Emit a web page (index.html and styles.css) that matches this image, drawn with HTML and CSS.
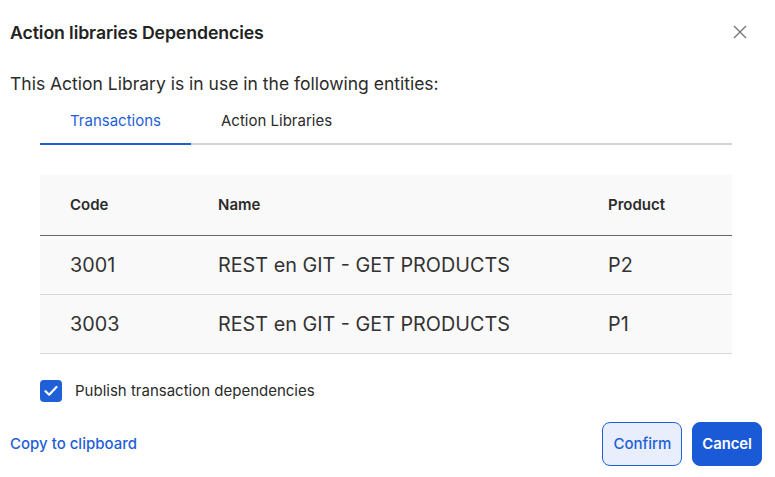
FILE: index.html
```html
<!DOCTYPE html>
<html>
<head>
<meta charset="utf-8">
<link rel="stylesheet" href="styles.css">
</head>
<body>
<div class="dialog">
  <div class="header">
    <h1 class="title">Action libraries Dependencies</h1>
    <button class="close" aria-label="Close">
      <svg width="14" height="14" viewBox="0 0 14 14"><path d="M1 1L13 13M13 1L1 13" stroke="#777" stroke-width="1.4" fill="none"/></svg>
    </button>
  </div>
  <p class="intro">This Action Library is in use in the following entities:</p>
  <div class="tabs">
    <div class="tab active">Transactions</div>
    <div class="tab">Action Libraries</div>
  </div>
  <table class="grid">
    <thead>
      <tr><th class="c1">Code</th><th class="c2">Name</th><th class="c3">Product</th></tr>
    </thead>
    <tbody>
      <tr><td>3001</td><td>REST en GIT - GET PRODUCTS</td><td>P2</td></tr>
      <tr><td>3003</td><td>REST en GIT - GET PRODUCTS</td><td>P1</td></tr>
    </tbody>
  </table>
  <label class="check">
    <span class="box"><svg width="14" height="12" viewBox="0 0 14 12"><path d="M1.5 6.2L5.2 9.8L12.5 2" stroke="#fff" stroke-width="2.2" fill="none" stroke-linecap="round" stroke-linejoin="round"/></svg></span>
    <span>Publish transaction dependencies</span>
  </label>
  <div class="footer">
    <a class="copy">Copy to clipboard</a>
    <div class="actions">
      <button class="btn secondary">Confirm</button>
      <button class="btn primary">Cancel</button>
    </div>
  </div>
</div>
</body>
</html>
```
FILE: styles.css
```css
* { box-sizing: border-box; }
html, body { margin: 0; padding: 0; background: #fff; }
body { font-family: Inter, "Noto Sans", sans-serif; color: #2b2b2b; }
.dialog { width: 775px; height: 477px; padding: 0 13px 0 10px; }
.header { display: flex; justify-content: space-between; align-items: center; height: 64px; }
.title { margin: 0; font-size: 17.7px; font-weight: 600; color: #222; letter-spacing: -0.1px; }
.close { border: 0; background: none; padding: 0; margin-right: 15px; display: flex; cursor: pointer; }
.intro { margin: 9px 0 0; font-size: 17.5px; line-height: 22px; color: #2b2b2b; }
.tabs { display: flex; margin: 11px 30px 0 30px; border-bottom: 2px solid #d4d4d4; }
.tab { padding: 0 30px; height: 37px; line-height: 30px; font-size: 15px; color: #2b2b2b; }
.tab.active { color: #1f5fd8; border-bottom: 2px solid #1f5fd8; margin-bottom: -2px; height: 39px; }
.grid { margin: 30px 30px 0 30px; width: 692px; border-collapse: collapse; background: #f9f9f9; }
.grid th { text-align: left; font-size: 15px; font-weight: 600; height: 60px; padding: 0 0 0 30px; color: #2b2b2b; border-bottom: 1px solid #666; }
.grid .c1 { width: 148px; }
.grid .c2 { width: 390px; }
.grid td { font-size: 19.8px; height: 59px; padding: 0 0 0 30px; color: #333; border-bottom: 1px solid #d8d8d8; }
.check { display: flex; align-items: center; gap: 13px; margin: 26px 0 0 30px; font-size: 15px; color: #2b2b2b; }
.box { width: 22px; height: 22px; border-radius: 4px; background: #1f5fd8; display: flex; align-items: center; justify-content: center; }
.footer { display: flex; justify-content: space-between; align-items: center; margin-top: 20px; }
.copy { color: #1f5fd8; font-size: 15px; font-weight: 500; }
.actions { display: flex; gap: 10px; }
.btn { height: 44px; border-radius: 8px; font-family: inherit; font-size: 15px; padding: 0 10px; }
.secondary { background: #e8eefb; border: 1px solid #1f5fd8; color: #1f5fd8; font-weight: 500; }
.primary { background: #1a5ad7; border: 1px solid #1a5ad7; color: #fff; font-weight: 600; padding: 0 9px; font-size: 14.8px; }
```
